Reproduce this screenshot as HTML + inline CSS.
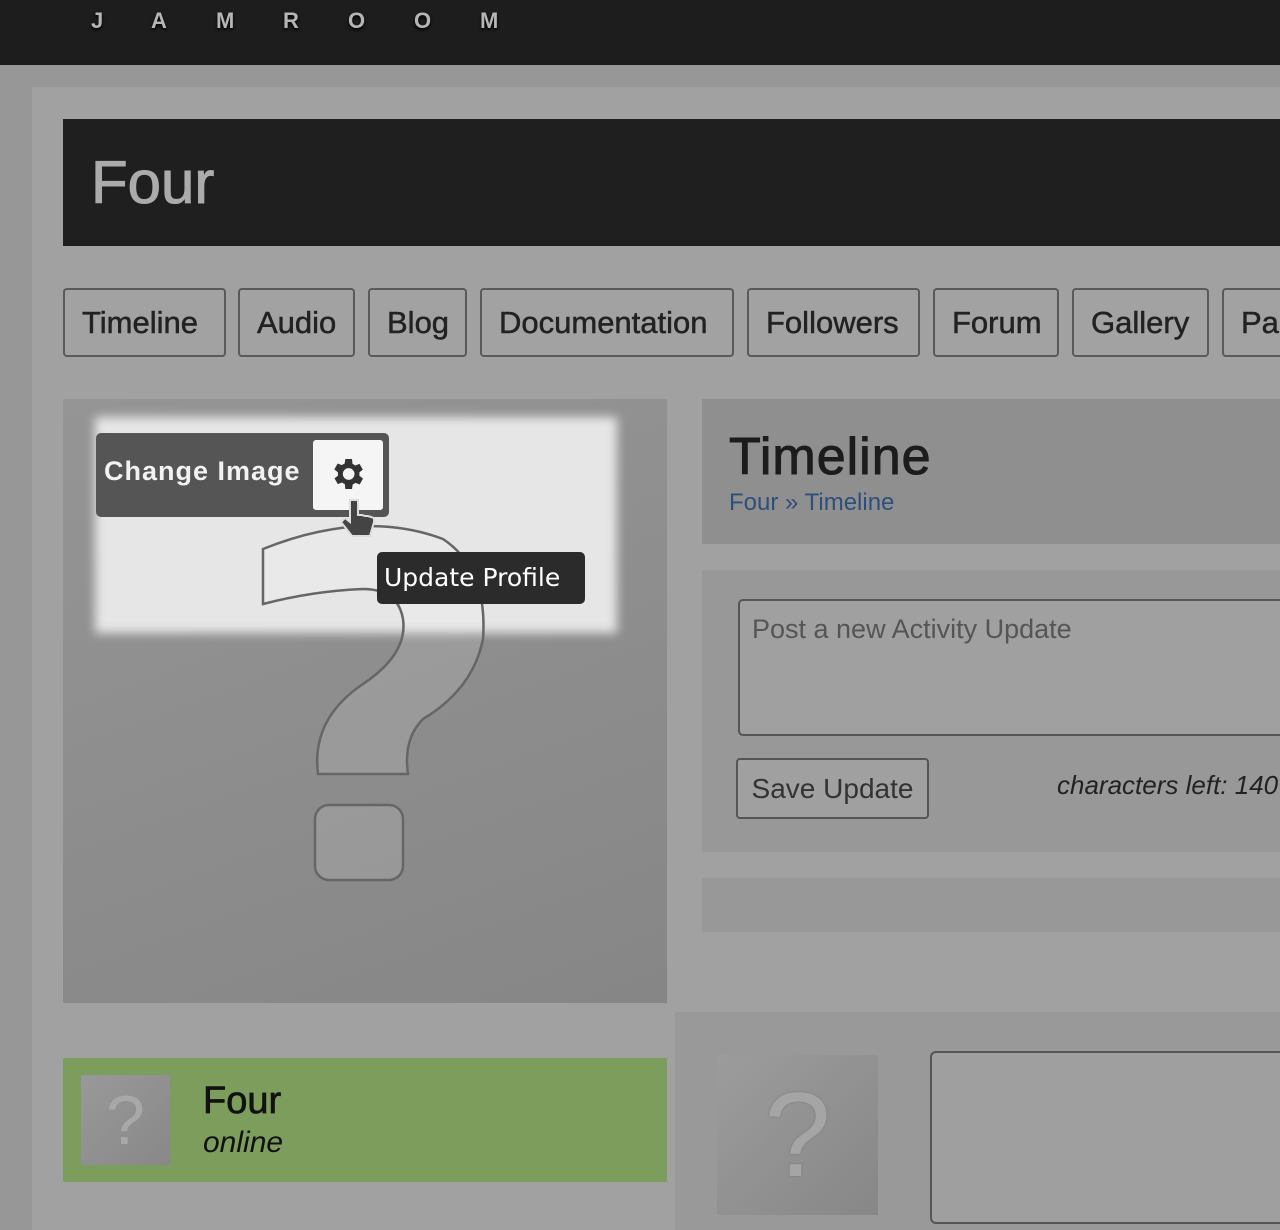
<!DOCTYPE html>
<html><head><meta charset="utf-8"><style>
*{margin:0;padding:0;box-sizing:border-box}
body{width:1280px;height:1230px;overflow:hidden;background:#979797;font-family:"Liberation Sans",sans-serif;position:relative}
.a{position:absolute}
.hdr{left:0;top:0;width:1280px;height:65px;background:#1d1d1d}
.jl{top:8px;font-size:22px;font-weight:bold;color:#b5b5b5;text-shadow:0 2px 3px #000}
.tab{top:288px;height:69px;border:2px solid #5a5a5a;border-radius:4px;background:#a2a2a2;font-size:31px;color:#222;line-height:65px;padding-left:17px;white-space:nowrap;overflow:hidden;-webkit-text-stroke:0.5px #222}
</style></head><body>
<div class="a hdr"></div>
<div class="a jl" style="left:91px">J</div><div class="a jl" style="left:151px">A</div><div class="a jl" style="left:216px">M</div><div class="a jl" style="left:283px">R</div><div class="a jl" style="left:348px">O</div><div class="a jl" style="left:414px">O</div><div class="a jl" style="left:480px">M</div>
<div class="a" style="left:32px;top:87px;width:1248px;height:1143px;background:#a1a1a1"></div>
<div class="a" style="left:63px;top:119px;width:1217px;height:127px;background:#1f1f1f"></div>
<div class="a" style="left:91px;top:148px;font-size:60px;color:#ababab;-webkit-text-stroke:1px #ababab">Four</div>
<div class="a tab" style="left:63px;width:163px">Timeline</div>
<div class="a tab" style="left:238px;width:117px">Audio</div>
<div class="a tab" style="left:368px;width:99px">Blog</div>
<div class="a tab" style="left:480px;width:254px">Documentation</div>
<div class="a tab" style="left:747px;width:173px">Followers</div>
<div class="a tab" style="left:933px;width:126px">Forum</div>
<div class="a tab" style="left:1072px;width:137px">Gallery</div>
<div class="a tab" style="left:1222px;width:70px">Pa</div>

<div class="a" style="left:63px;top:399px;width:604px;height:604px;background:linear-gradient(160deg,#959595,#868686);overflow:hidden">
<div class="a" style="left:32px;top:18px;width:522px;height:216px;background:#e6e6e6;filter:blur(5px)"></div>
<svg class="a" style="left:0;top:0" width="604" height="604"><path d="M200,205 L200,150 Q300,110 380,140 Q425,170 420,240 Q410,290 360,320 Q340,340 345,375 L255,375 Q248,320 300,285 Q345,255 340,220 Q335,190 300,190 Q250,192 200,205 Z" fill="rgba(255,255,255,0.12)" stroke="#666" stroke-width="2.5"/><rect x="252" y="406" width="88" height="75" rx="14" fill="rgba(255,255,255,0.12)" stroke="#666" stroke-width="2.5"/></svg>
</div>
<div class="a" style="left:96px;top:433px;width:293px;height:84px;background:#555;border-radius:5px"></div>
<div class="a" style="left:104px;top:456px;font-size:27px;font-weight:bold;color:#f2f2f2;letter-spacing:1px">Change Image</div>
<div class="a" style="left:313px;top:440px;width:70px;height:70px;background:#f5f5f5;border-radius:3px"></div>
<svg class="a" style="left:327px;top:454px" width="40" height="40" viewBox="0 0 24 24"><path fill="#333" d="M19.4 13a7.5 7.5 0 0 0 0-2l2.1-1.6-2-3.5-2.5 1a7 7 0 0 0-1.7-1L15 3h-4l-.4 2.7a7 7 0 0 0-1.7 1l-2.5-1-2 3.5L6.6 11a7.5 7.5 0 0 0 0 2l-2.1 1.6 2 3.5 2.5-1a7 7 0 0 0 1.7 1L11 21h4l.4-2.7a7 7 0 0 0 1.7-1l2.5 1 2-3.5zM13 15.5a3.5 3.5 0 1 1 0-7 3.5 3.5 0 0 1 0 7z"/></svg>
<svg class="a" style="left:336px;top:496px" width="46" height="48" viewBox="0 0 46 48"><path d="M14 4v22l-5-4-4 4 11 14h18l4-14V22l-6-2-3 0-3-1-4 0V4z" fill="#444" stroke="#ddd" stroke-width="2"/></svg>
<div class="a" style="left:377px;top:552px;width:208px;height:52px;background:#2b2b2b;border-radius:5px;color:#fff;line-height:52px;padding-left:7px;font-family:'DejaVu Sans',sans-serif;font-size:25px;white-space:nowrap">Update Profile</div>

<div class="a" style="left:702px;top:399px;width:578px;height:145px;background:#8f8f8f"></div>
<div class="a" style="left:729px;top:427px;font-size:52px;color:#1c1c1c;letter-spacing:1px;-webkit-text-stroke:1px #1c1c1c">Timeline</div>
<div class="a" style="left:729px;top:489px;font-size:24px;color:#2d4f7a">Four » Timeline</div>
<div class="a" style="left:702px;top:570px;width:578px;height:282px;background:#989898"></div>
<div class="a" style="left:738px;top:599px;width:560px;height:137px;border:2px solid #555;border-radius:5px;background:#a0a0a0"></div>
<div class="a" style="left:752px;top:614px;font-size:27px;color:#555">Post a new Activity Update</div>
<div class="a" style="left:736px;top:758px;width:193px;height:61px;border:2px solid #555;border-radius:4px;background:#a0a0a0;font-size:28px;color:#333;text-align:center;line-height:57px">Save Update</div>
<div class="a" style="left:1057px;top:770px;font-size:26px;font-style:italic;color:#222;white-space:nowrap">characters left: 140</div>
<div class="a" style="left:702px;top:878px;width:578px;height:54px;background:#989898"></div>

<div class="a" style="left:63px;top:1058px;width:604px;height:124px;background:#7d9d5d"></div>
<div class="a" style="left:81px;top:1075px;width:89px;height:90px;background:linear-gradient(135deg,#999,#888);color:#a8a8a8;font-size:70px;text-align:center;line-height:90px">?</div>
<div class="a" style="left:203px;top:1080px;font-size:38px;color:#111;-webkit-text-stroke:0.7px #111">Four</div>
<div class="a" style="left:203px;top:1126px;font-size:30px;font-style:italic;color:#111">online</div>
<div class="a" style="left:675px;top:1012px;width:605px;height:218px;background:#999"></div>
<div class="a" style="left:717px;top:1055px;width:161px;height:160px;background:linear-gradient(135deg,#9c9c9c,#878787);color:#a5a5a5;font-size:120px;text-align:center;line-height:160px;text-shadow:0 0 2px #777">?</div>
<div class="a" style="left:930px;top:1051px;width:370px;height:173px;border:2px solid #555;border-radius:6px;background:#9f9f9f"></div>
</body></html>
